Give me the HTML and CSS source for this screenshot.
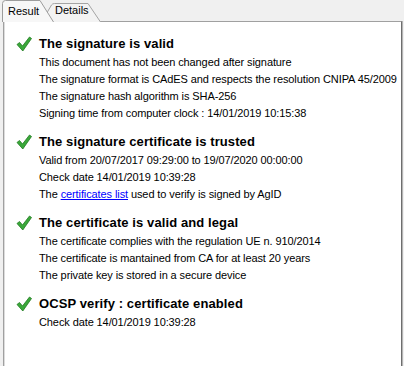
FILE: index.html
```html
<!DOCTYPE html>
<html lang="en">
<head>
    <meta charset="UTF-8">
    <title>Signature Verification</title>
    <link rel="stylesheet" href="styles.css">
</head>
<body>
    <div class="tabs">
        <div class="tab tab-active">
            <svg class="tab-shape" width="52" height="22" viewBox="0 0 52 22">
                <path d="M0.5,22 V3.5 Q0.5,0.5 3.5,0.5 H38 L51.5,22" fill="#f7f7f7" stroke="#9c9c9c"/>
            </svg>
            <span>Result</span>
        </div>
        <div class="tab">
            <svg class="tab-shape" width="60" height="19" viewBox="0 0 60 19">
                <path d="M0.5,19 L10.5,2 Q11.5,0.5 13.5,0.5 H47 L59.5,19" fill="#f3f3f3" stroke="#a4a4a4"/>
            </svg>
            <span>Details</span>
        </div>
    </div>

    <div class="panel">
        <div class="check">
            <svg class="tick" width="16" height="16" viewBox="0 0 16 16">
                <path d="M1,8.5 L3.5,6.5 L6.5,10 L13.5,1 L15.5,2.5 L6.8,15 Z" fill="#3aa83a" stroke="#1f7a1f" stroke-width="0.8" stroke-linejoin="round"/>
            </svg>
            <div class="check-body">
                <h2>The signature is valid</h2>
                <p>This document has not been changed after signature</p>
                <p>The signature format is CAdES and respects the resolution CNIPA 45/2009</p>
                <p>The signature hash algorithm is SHA-256</p>
                <p>Signing time from computer clock : 14/01/2019 10:15:38</p>
            </div>
        </div>

        <div class="check">
            <svg class="tick" width="16" height="16" viewBox="0 0 16 16">
                <path d="M1,8.5 L3.5,6.5 L6.5,10 L13.5,1 L15.5,2.5 L6.8,15 Z" fill="#3aa83a" stroke="#1f7a1f" stroke-width="0.8" stroke-linejoin="round"/>
            </svg>
            <div class="check-body">
                <h2>The signature certificate is trusted</h2>
                <p>Valid from 20/07/2017 09:29:00 to 19/07/2020 00:00:00</p>
                <p>Check date 14/01/2019 10:39:28</p>
                <p>The <a href="#">certificates list</a> used to verify is signed by AgID</p>
            </div>
        </div>

        <div class="check">
            <svg class="tick" width="16" height="16" viewBox="0 0 16 16">
                <path d="M1,8.5 L3.5,6.5 L6.5,10 L13.5,1 L15.5,2.5 L6.8,15 Z" fill="#3aa83a" stroke="#1f7a1f" stroke-width="0.8" stroke-linejoin="round"/>
            </svg>
            <div class="check-body">
                <h2>The certificate is valid and legal</h2>
                <p>The certificate complies with the regulation UE n. 910/2014</p>
                <p>The certificate is mantained from CA for at least 20 years</p>
                <p>The private key is stored in a secure device</p>
            </div>
        </div>

        <div class="check">
            <svg class="tick" width="16" height="16" viewBox="0 0 16 16">
                <path d="M1,8.5 L3.5,6.5 L6.5,10 L13.5,1 L15.5,2.5 L6.8,15 Z" fill="#3aa83a" stroke="#1f7a1f" stroke-width="0.8" stroke-linejoin="round"/>
            </svg>
            <div class="check-body">
                <h2>OCSP verify : certificate enabled</h2>
                <p>Check date 14/01/2019 10:39:28</p>
            </div>
        </div>
    </div>
</body>
</html>
```

FILE: styles.css
```css
body {
    margin: 0;
    background-color: #f0f0f0;
    font-family: "Liberation Sans", Arial, sans-serif;
    font-size: 11px;
    color: #000;
    overflow: hidden;
}

/* Tab strip */
.tabs {
    display: flex;
    height: 21px;
    padding-left: 2px;
}

.tab {
    position: relative;
    height: 19px;
    margin-top: 3px;
    width: 60px;
    margin-left: -13px;
    z-index: 1;
}

.tab-active {
    height: 22px;
    margin-top: 0;
    width: 52px;
    margin-left: 0;
    z-index: 2;
}

.tab-shape {
    position: absolute;
    left: 0;
    top: 0;
}

.tab span {
    position: relative;
    display: block;
    padding-left: 14px;
    line-height: 15px;
    font-size: 11px;
}

.tab-active span {
    padding-left: 6px;
    line-height: 22px;
}

/* Result panel */
.panel {
    margin-left: 3px;
    width: 399px;
    height: 360px;
    background-color: #ffffff;
    border-top: 1px solid #a0a0a0;
    border-left: 1px solid #a0a0a0;
    border-right: 1px solid #6e6e6e;
    box-shadow: 1px 0 0 #b4b4b4, inset 1px 0 0 #dcdcdc;
    padding: 12px 0 0 12px;
    box-sizing: border-box;
}

.check {
    display: flex;
    gap: 7px;
    margin-bottom: 10px;
}

.tick {
    flex: none;
    margin-top: 2px;
}

.check-body h2 {
    margin: 0;
    font-size: 13px;
    font-weight: bold;
    line-height: 20px;
    letter-spacing: 0.1px;
}

.check-body p {
    margin: 0;
    line-height: 17px;
    letter-spacing: -0.1px;
}

.check-body a {
    color: #0000ff;
}
```
